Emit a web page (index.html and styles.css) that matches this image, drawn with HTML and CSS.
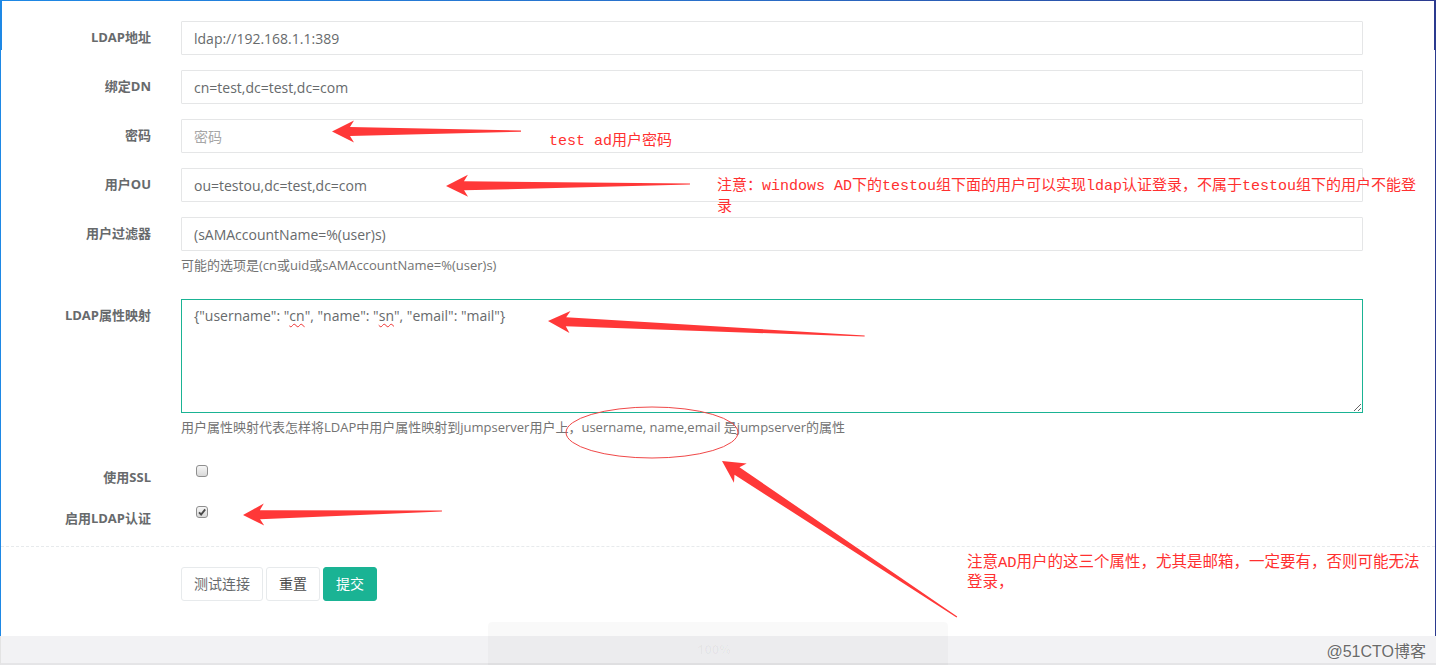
FILE: index.html
```html
<!DOCTYPE html>
<html lang="zh-CN">
<head>
<meta charset="utf-8">
<title>LDAP设置</title>
<link rel="stylesheet" href="styles.css">
</head>
<body>
<div class="page">
  <div class="frame">
    <form class="form">
      <div class="group">
        <label class="label">LDAP地址</label>
        <div class="control"><input class="input" type="text" value="ldap://192.168.1.1:389"></div>
      </div>
      <div class="group">
        <label class="label">绑定DN</label>
        <div class="control"><input class="input" type="text" value="cn=test,dc=test,dc=com"></div>
      </div>
      <div class="group">
        <label class="label">密码</label>
        <div class="control"><input class="input" type="password" placeholder="密码"></div>
      </div>
      <div class="group">
        <label class="label">用户OU</label>
        <div class="control"><input class="input" type="text" value="ou=testou,dc=test,dc=com"></div>
      </div>
      <div class="group">
        <label class="label">用户过滤器</label>
        <div class="control">
          <input class="input" type="text" value="(sAMAccountName=%(user)s)">
          <div class="help">可能的选项是(cn或uid或sAMAccountName=%(user)s)</div>
        </div>
      </div>
      <div class="group">
        <label class="label">LDAP属性映射</label>
        <div class="control">
          <div class="textarea">{"username": "<span class="spell">cn</span>", "name": "<span class="spell">sn</span>", "email": "mail"}</div>
          <div class="help">用户属性映射代表怎样将LDAP中用户属性映射到jumpserver用户上，username, name,email 是jumpserver的属性</div>
        </div>
      </div>
      <div class="group check-group">
        <label class="label">使用SSL</label>
        <div class="control check-control"><span class="checkbox"></span></div>
      </div>
      <div class="group check-group last">
        <label class="label">启用LDAP认证</label>
        <div class="control check-control">
          <span class="checkbox">
            <svg viewBox="0 0 12 12" width="12" height="12"><path d="M3 6.4 L5.1 8.5 L9.2 3.4" fill="none" stroke="#4a4a4a" stroke-width="1.9"/></svg>
          </span>
        </div>
      </div>
      <div class="divider"></div>
      <div class="group">
        <div></div>
        <div class="buttons">
          <button type="button" class="btn">测试连接</button>
          <button type="button" class="btn btn-dark">重置</button>
          <button type="button" class="btn btn-primary">提交</button>
        </div>
      </div>
    </form>
  </div>
  <div class="band"></div>

  <div class="ghost-toolbar"><span class="ghost-zoom">100%</span></div>

  <svg class="overlay" width="1436" height="665" viewBox="0 0 1436 665">
    <g fill="#ff3838">
      <g transform="translate(332,131.5) rotate(-0.1)">
        <polygon points="0,0 22,-11 18,-4.5 189,-0.6 189,0.6 18,4.5 22,11"/>
      </g>
      <g transform="translate(446,186) rotate(-0.47)">
        <polygon points="0,0 22,-11 18,-4.5 244,-0.6 244,0.6 18,4.5 22,11"/>
      </g>
      <g transform="translate(548,321) rotate(2.71)">
        <polygon points="0,0 22,-11 18,-4.5 317,-0.6 317,0.6 18,4.5 22,11"/>
      </g>
      <g transform="translate(722,461) rotate(33.6)">
        <polygon points="0,0 22,-11.5 18,-4.5 282,-0.6 282,0.6 18,4.5 22,11.5"/>
      </g>
      <g transform="translate(243,515) rotate(-1.15)">
        <polygon points="0,0 21,-11 17,-4.5 199,-0.6 199,0.6 17,4.5 21,11"/>
      </g>
    </g>
    <ellipse cx="652" cy="432.5" rx="86" ry="25.5" fill="none" stroke="#f04848" stroke-width="1"/>
  </svg>

  <div class="note note-1">test ad用户密码</div>
  <div class="note note-2">注意：windows AD下的testou组下面的用户可以实现ldap认证登录，不属于testou组下的用户不能登<br>录</div>
  <div class="note note-3">注意AD用户的这三个属性，尤其是邮箱，一定要有，否则可能无法<br>登录，</div>

  <div class="watermark">@51CTO博客</div>
</div>
</body>
</html>
```

FILE: styles.css
```css
* {
  box-sizing: border-box;
}

html, body {
  margin: 0;
  padding: 0;
  background: #ffffff;
}

body {
  font-family: "Open Sans", "Noto Sans CJK SC", sans-serif;
  color: #676a6c;
  width: 1436px;
  height: 665px;
  overflow: hidden;
}

.page {
  position: relative;
  width: 1436px;
  height: 665px;
}

.frame {
  position: relative;
  height: 636px;
  border-image: linear-gradient(90deg, #1e88e5 0%, #2a6fc9 50%, #2b3a8f 100%) 1;
  border-width: 1px 1px 0 1px;
  border-style: solid;
  border-color: #1e88e5 #e6e6e6 transparent #e3e3e3;
  padding-top: 20px;
}

.frame::before {
  content: "";
  position: absolute;
  left: -1px;
  top: -1px;
  width: 2px;
  height: 50px;
  background: #1e88e5;
}

.frame::after {
  content: "";
  position: absolute;
  right: -1px;
  top: -1px;
  width: 2px;
  height: 50px;
  background: #2b3a8f;
}

.form {
  margin: 0;
}

.group {
  display: grid;
  grid-template-columns: 150px 1182px;
  column-gap: 30px;
  margin-bottom: 15px;
}

.label {
  text-align: right;
  font-weight: 700;
  font-size: 13px;
  line-height: 20px;
  padding-top: 6px;
  color: #676a6c;
}

.input {
  display: block;
  width: 100%;
  height: 34px;
  padding: 6px 12px;
  border: 1px solid #e5e6e7;
  border-radius: 1px;
  background: #ffffff;
  font-family: "Open Sans", "Noto Sans CJK SC", sans-serif;
  font-size: 14px;
  color: #676a6c;
  outline: none;
}

.input::placeholder {
  color: #a6a6a6;
}

.help {
  margin-top: 5px;
  margin-bottom: 10px;
  font-size: 13px;
  line-height: 18px;
  color: #737373;
  white-space: nowrap;
}

.textarea {
  height: 114px;
  padding: 6px 12px;
  border: 1px solid #1ab394;
  font-size: 14px;
  line-height: 20px;
  color: #676a6c;
  resize: vertical;
  overflow: auto;
}

.spell {
  text-decoration: underline wavy #e33;
  text-decoration-thickness: 1px;
  text-underline-offset: 2px;
}

.check-control {
  padding-top: 4px;
}

.checkbox {
  display: block;
  width: 12px;
  height: 12px;
  margin-left: 15px;
  border: 1px solid #8f8f8f;
  border-radius: 3px;
  background: linear-gradient(#f6f6f6, #d9d9d9);
  position: relative;
}

.checkbox svg {
  position: absolute;
  left: -1px;
  top: -1px;
}

.group.last {
  margin-bottom: 18px;
}

.divider {
  border-top: 1px dashed #e7eaec;
  margin: 0 0 20px 0;
  height: 0;
}

.buttons {
  display: flex;
  gap: 3px;
}

.btn {
  height: 34px;
  padding: 6px 12px;
  border: 1px solid #e7eaec;
  border-radius: 3px;
  background: #ffffff;
  font-family: "Open Sans", "Noto Sans CJK SC", sans-serif;
  font-size: 14px;
  line-height: 20px;
  color: #676a6c;
  cursor: pointer;
}

.btn-dark {
  color: #4d4d4d;
}

.btn-primary {
  background: #1ab394;
  border-color: #1ab394;
  color: #ffffff;
}

.band {
  height: 29px;
  background: #f2f2f4;
  border-bottom: 2px solid #e5e5e7;
  border-left: 1px solid #e3e3e3;
}

.ghost-toolbar {
  position: absolute;
  left: 488px;
  top: 622px;
  width: 460px;
  height: 43px;
  background: rgba(0, 0, 0, 0.022);
  border-radius: 4px 4px 0 0;
}

.ghost-zoom {
  position: absolute;
  left: 209px;
  top: 18px;
  font-size: 13px;
  color: rgba(0, 0, 0, 0.03);
  font-weight: 700;
}

.overlay {
  position: absolute;
  left: 0;
  top: 0;
  pointer-events: none;
}

.note {
  position: absolute;
  font-family: "Liberation Mono", "Noto Sans CJK SC", monospace;
  font-size: 15px;
  line-height: 21px;
  color: #ff3030;
  white-space: nowrap;
}

.note-1 {
  left: 549px;
  top: 131px;
}

.note-2 {
  left: 717px;
  top: 176px;
}

.note-3 {
  left: 967px;
  top: 553px;
  font-size: 15.5px;
  line-height: 20px;
}

.watermark {
  position: absolute;
  right: 10px;
  top: 638px;
  font-family: "Liberation Sans", "Noto Sans CJK SC", sans-serif;
  font-size: 16px;
  color: #6a6a6a;
  text-shadow: 0 0 2px #ffffff;
}
```
